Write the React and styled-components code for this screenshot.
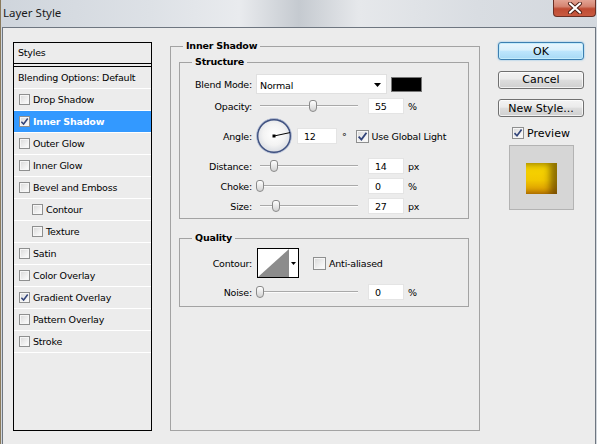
import React from "react";
import styled, { createGlobalStyle, css } from "styled-components";

const GlobalStyle = createGlobalStyle`
  html, body {
    margin: 0;
    padding: 0;
    background: #ececec;
  }
  body {
    font-family: "DejaVu Sans", Tahoma, sans-serif;
    font-size: 9.5px;
    letter-spacing: -0.2px;
    color: #000;
  }
`;

const styleItems = [
  { label: "Drop Shadow" },
  { label: "Inner Shadow", checked: true, selected: true },
  { label: "Outer Glow" },
  { label: "Inner Glow" },
  { label: "Bevel and Emboss" },
  { label: "Contour", sub: true },
  { label: "Texture", sub: true },
  { label: "Satin" },
  { label: "Color Overlay" },
  { label: "Gradient Overlay", checked: true },
  { label: "Pattern Overlay" },
  { label: "Stroke" },
];

const CheckBox = ({ checked, size = 11 }) => (
  <Box $size={size}>
    {checked && (
      <svg width={size - 2} height={size - 2} viewBox="0 0 10 10">
        <path d="M1.5 5.2 L4 7.8 L8.6 1.6" fill="none" stroke="#33457a" strokeWidth="1.7" />
      </svg>
    )}
  </Box>
);

const Slider = ({ pos }) => (
  <Track>
    <Thumb style={{ left: pos }} />
  </Track>
);

const App = () => {
  return (
    <Window>
      <GlobalStyle />
      <TitleBar>
        <Title>Layer Style</Title>
        <CloseButton>
          <svg width="16" height="12" viewBox="0 0 16 12">
            <path d="M3 1.5 L13 10.5 M13 1.5 L3 10.5" stroke="#4a1d14" strokeWidth="4" strokeLinecap="round" />
            <path d="M3 1.5 L13 10.5 M13 1.5 L3 10.5" stroke="#fff" strokeWidth="2.2" strokeLinecap="round" />
          </svg>
        </CloseButton>
      </TitleBar>
      <Client>
        <StyleList>
          <ListHeader>Styles</ListHeader>
          <BlendingRow>Blending Options: Default</BlendingRow>
          {styleItems.map((item) => (
            <ListItem key={item.label} $selected={item.selected} $sub={item.sub}>
              <CheckBox checked={item.checked} />
              <span>{item.label}</span>
            </ListItem>
          ))}
        </StyleList>

        <OuterGroup>
          <Legend>Inner Shadow</Legend>
          <StructureGroup>
            <Legend>Structure</Legend>
            <Row $h={20}>
              <Label>Blend Mode:</Label>
              <Select>
                <span>Normal</span>
                <svg width="7" height="4" viewBox="0 0 7 4">
                  <path d="M0 0 H7 L3.5 4 Z" fill="#000" />
                </svg>
              </Select>
              <ColorSwatch />
            </Row>
            <Row>
              <Label>Opacity:</Label>
              <Slider pos={53} />
              <NumberBox>55</NumberBox>
              <Unit>%</Unit>
            </Row>
            <Row $h={36}>
              <Label>Angle:</Label>
              <Dial>
                <svg width="36" height="36" viewBox="0 0 36 36">
                  <defs>
                    <radialGradient id="dialFill" cx="50%" cy="45%" r="55%">
                      <stop offset="0%" stopColor="#ffffff" />
                      <stop offset="60%" stopColor="#f3f3f3" />
                      <stop offset="100%" stopColor="#d9dce2" />
                    </radialGradient>
                  </defs>
                  <circle cx="18" cy="18" r="16.5" fill="url(#dialFill)" stroke="#3f5180" strokeWidth="1.8" />
                  <circle cx="18" cy="18" r="17.5" fill="none" stroke="#b8c2d8" strokeWidth="0.8" />
                  <line x1="18" y1="18" x2="34" y2="14.6" stroke="#000" strokeWidth="1" />
                  <rect x="16.5" y="16.5" width="3" height="3" fill="#000" />
                </svg>
              </Dial>
              <NumberBox $w={40} $ml={5}>12</NumberBox>
              <Unit $ml={5}>°</Unit>
              <CheckLabel $ml={9}>
                <CheckBox checked size={13} />
                Use Global Light
              </CheckLabel>
            </Row>
            <Row>
              <Label>Distance:</Label>
              <Slider pos={14} />
              <NumberBox>14</NumberBox>
              <Unit>px</Unit>
            </Row>
            <Row>
              <Label>Choke:</Label>
              <Slider pos={0} />
              <NumberBox>0</NumberBox>
              <Unit>%</Unit>
            </Row>
            <Row>
              <Label>Size:</Label>
              <Slider pos={16} />
              <NumberBox>27</NumberBox>
              <Unit>px</Unit>
            </Row>
          </StructureGroup>

          <QualityGroup>
            <Legend>Quality</Legend>
            <Row $h={30}>
              <Label>Contour:</Label>
              <ContourPicker>
                <svg width="31" height="28" viewBox="0 0 31 28">
                  <path d="M0 28 L31 0 L31 28 Z" fill="#8c8c8c" />
                </svg>
                <ContourArrow>
                  <svg width="5" height="3" viewBox="0 0 5 3">
                    <path d="M0 0 H5 L2.5 3 Z" fill="#000" />
                  </svg>
                </ContourArrow>
              </ContourPicker>
              <CheckLabel $ml={14}>
                <CheckBox size={13} />
                Anti-aliased
              </CheckLabel>
            </Row>
            <Row>
              <Label>Noise:</Label>
              <Slider pos={0} />
              <NumberBox>0</NumberBox>
              <Unit>%</Unit>
            </Row>
          </QualityGroup>
        </OuterGroup>

        <ButtonColumn>
          <Button $primary>OK</Button>
          <Button>Cancel</Button>
          <Button>New Style...</Button>
          <PreviewToggle>
            <CheckBox checked size={12} />
            Preview
          </PreviewToggle>
          <PreviewBox>
            <PreviewSwatch />
          </PreviewBox>
        </ButtonColumn>
      </Client>
    </Window>
  );
};

export default App;

const Window = styled.div`
  width: 597px;
  height: 444px;
  overflow: hidden;
  display: flex;
  flex-direction: column;
  box-sizing: border-box;
  border-left: 1px solid #8a7a5c;
  background: linear-gradient(
    90deg,
    #cfd5dc 0%,
    #dde1e6 25%,
    #e9ebee 40%,
    #c5cad0 50%,
    #e6e8eb 60%,
    #d9dde2 80%,
    #d3d8de 100%
  );
`;

const TitleBar = styled.div`
  height: 27px;
  flex-shrink: 0;
  display: flex;
  align-items: flex-start;
  justify-content: space-between;
  padding-left: 2px;
`;

const Title = styled.div`
  font-family: "Noto Sans", "Open Sans", sans-serif;
  font-size: 11.5px;
  letter-spacing: 0;
  line-height: 26px;
  color: #1b1b1b;
`;

const CloseButton = styled.div`
  width: 43px;
  height: 17px;
  box-sizing: border-box;
  margin-right: 1px;
  border: 1px solid #6a2f24;
  border-top: none;
  border-radius: 0 0 4px 4px;
  background: linear-gradient(#e3a393 0%, #d58572 40%, #bf4b33 55%, #c85a40 100%);
  display: flex;
  align-items: center;
  justify-content: center;
`;

const Client = styled.div`
  flex: 1;
  margin: 0 1px 0 1px;
  border: 1px solid #6e7680;
  border-bottom: none;
  background: #ececec;
  display: grid;
  grid-template-columns: 139px 310px 86px;
  column-gap: 18px;
  align-items: start;
  padding: 11px 0 0 10px;
`;

const StyleList = styled.div`
  margin-top: 3px;
  height: 389px;
  box-sizing: border-box;
  border: 1px solid #000;
  display: flex;
  flex-direction: column;
`;

const ListHeader = styled.div`
  height: 20px;
  line-height: 20px;
  padding-left: 4px;
  border-bottom: 1px solid #000;
  margin-bottom: 2px;
`;

const BlendingRow = styled.div`
  height: 21px;
  line-height: 21px;
  padding-left: 4px;
  border-top: 1px solid #000;
  border-bottom: 1px solid #fff;
`;

const ListItem = styled.div`
  height: 21px;
  display: flex;
  align-items: center;
  gap: 3px;
  padding-left: ${(p) => (p.$sub ? 18 : 5)}px;
  border-bottom: 1px solid #fff;
  ${(p) =>
    p.$selected &&
    css`
      background: #3399ff;
      color: #fff;
      font-weight: bold;
    `}
`;

const Box = styled.span`
  width: ${(p) => p.$size}px;
  height: ${(p) => p.$size}px;
  box-sizing: border-box;
  flex-shrink: 0;
  border: 1px solid #8e8f8f;
  background: linear-gradient(135deg, #d8d8d8 0%, #f0f0f0 60%, #ffffff 100%);
  box-shadow: inset 0 0 0 1px #f6f6f6;
  display: inline-flex;
  align-items: center;
  justify-content: center;
`;

const OuterGroup = styled.fieldset`
  margin: 0;
  padding: 0;
  height: 392px;
  box-sizing: border-box;
  border: 1px solid #a3a3a3;
  min-width: 0;
`;

const Legend = styled.legend`
  margin-left: 12px;
  padding: 0 3px;
  font-weight: bold;
  line-height: 14px;
`;

const StructureGroup = styled.fieldset`
  margin: 2px 10px 0 8px;
  padding: 5px 0 4px 0;
  border: 1px solid #a3a3a3;
  display: flex;
  flex-direction: column;
  gap: 4px;
  min-width: 0;
`;

const QualityGroup = styled(StructureGroup)`
  margin-top: 12px;
  padding: 3px 0 6px 0;
  gap: 6px;
`;

const Row = styled.div`
  height: ${(p) => p.$h || 16}px;
  display: flex;
  align-items: center;
`;

const Label = styled.div`
  width: 72px;
  flex-shrink: 0;
  text-align: right;
`;

const Select = styled.div`
  width: 131px;
  height: 20px;
  box-sizing: border-box;
  margin-left: 4px;
  background: #fff;
  border: 1px solid #e0e0e0;
  display: flex;
  align-items: center;
  justify-content: space-between;
  padding: 2px 5px 0 3px;
`;

const ColorSwatch = styled.div`
  width: 31px;
  height: 15px;
  box-sizing: border-box;
  margin-left: 4px;
  background: #000;
  border: 1px solid #777;
`;

const Track = styled.div`
  position: relative;
  width: 98px;
  height: 16px;
  margin: 0 10px 0 8px;
  flex-shrink: 0;
  &::before {
    content: "";
    position: absolute;
    left: 0;
    right: 0;
    top: 7px;
    height: 1px;
    background: #a9a9a9;
    border-bottom: 1px solid #fbfbfb;
  }
`;

const Thumb = styled.div`
  position: absolute;
  top: 2px;
  width: 8px;
  height: 12px;
  margin-left: -4px;
  box-sizing: border-box;
  border: 1px solid #8a8a8a;
  border-radius: 3px 3px 4px 4px;
  background: linear-gradient(#ffffff, #e4e4e4 60%, #d2d2d2);
`;

const NumberBox = styled.div`
  width: ${(p) => p.$w || 36}px;
  height: 16px;
  box-sizing: border-box;
  margin-left: ${(p) => p.$ml || 0}px;
  flex-shrink: 0;
  background: #fff;
  border: 1px solid #e4e4e4;
  padding: 1px 0 0 6px;
  line-height: 14px;
`;

const Unit = styled.span`
  margin-left: ${(p) => p.$ml || 4}px;
`;

const Dial = styled.div`
  width: 36px;
  height: 36px;
  margin-left: 4px;
  flex-shrink: 0;
  display: flex;
`;

const CheckLabel = styled.label`
  display: flex;
  align-items: center;
  gap: 3px;
  margin-left: ${(p) => p.$ml || 0}px;
  white-space: nowrap;
`;

const ContourPicker = styled.div`
  width: 42px;
  height: 30px;
  box-sizing: border-box;
  margin-left: 5px;
  border: 1px solid #000;
  background: #fff;
  display: flex;
`;

const ContourArrow = styled.div`
  flex: 1;
  display: flex;
  align-items: center;
  justify-content: center;
`;

const ButtonColumn = styled.div`
  margin-top: 3px;
  display: flex;
  flex-direction: column;
`;

const Button = styled.div`
  height: 18px;
  box-sizing: border-box;
  margin-bottom: 10.5px;
  border: 1px solid #707070;
  border-radius: 3px;
  background: linear-gradient(#f3f3f3 0%, #ebebeb 45%, #dddddd 50%, #cfcfcf 100%);
  box-shadow: inset 0 0 0 1px rgba(255, 255, 255, 0.7);
  display: flex;
  align-items: center;
  justify-content: center;
  font-size: 11px;
  letter-spacing: 0;
  ${(p) =>
    p.$primary &&
    css`
      border-color: #3c7fb1;
      background: linear-gradient(#eaf6fd 0%, #d9f0fc 45%, #bee6fd 50%, #a7d9f5 100%);
      box-shadow: inset 0 0 0 1px #c4ecfc, 0 0 2px #6fb8e6;
    `}
`;

const PreviewToggle = styled.label`
  display: flex;
  align-items: center;
  justify-content: center;
  gap: 3px;
  font-size: 11px;
  letter-spacing: 0;
  height: 12px;
  margin-top: -0.5px;
`;

const PreviewBox = styled.div`
  width: 65px;
  height: 65px;
  box-sizing: border-box;
  margin: 6px auto 0;
  padding-top: 2px;
  background: #d6d6d6;
  border: 1px solid #b3b3b3;
  display: flex;
  align-items: center;
  justify-content: center;
`;

const PreviewSwatch = styled.div`
  width: 31px;
  height: 31px;
  background: linear-gradient(#f8d800 0%, #f2c800 55%, #e2a800 80%, #c98200 100%);
  box-shadow: inset -7px 1px 7px rgba(70, 45, 0, 0.6);
`;
